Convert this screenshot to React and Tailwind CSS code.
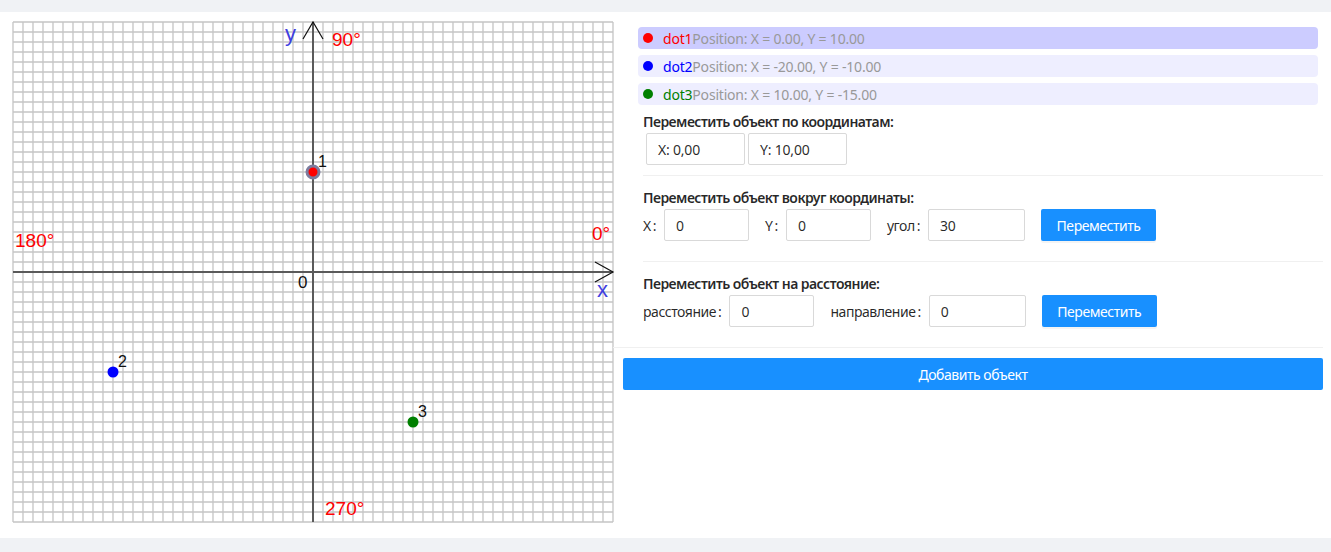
import React from "react";

const dots = [
  { name: "dot1", color: "#ff0000", x: 0, y: 10, sel: true, label: "1", pos: "X = 0.00, Y = 10.00" },
  { name: "dot2", color: "#0000ff", x: -20, y: -10, label: "2", pos: "X = -20.00, Y = -10.00" },
  { name: "dot3", color: "#008000", x: 10, y: -15, label: "3", pos: "X = 10.00, Y = -15.00" },
];

function Plane() {
  const v = [];
  for (let i = 0; i <= 60; i++) v.push(i * 10);
  const h = [];
  for (let i = 0; i <= 50; i++) h.push(i * 10);
  const font = "'Liberation Sans', Arial, sans-serif";
  return (
    <svg width="600" height="500" className="shrink-0 overflow-visible block">
      {v.map((x) => (
        <line key={"v" + x} x1={x} y1={0} x2={x} y2={500} stroke="#c4c4c4" strokeWidth="1.3" />
      ))}
      {h.map((y) => (
        <line key={"h" + y} x1={0} y1={y} x2={600} y2={y} stroke="#c4c4c4" strokeWidth="1.3" />
      ))}
      <line x1="300" y1="0" x2="300" y2="500" stroke="#5a5a5a" strokeWidth="2" />
      <line x1="0" y1="250" x2="600" y2="250" stroke="#5a5a5a" strokeWidth="2" />
      <polyline points="290,17 300,0 310,17" fill="none" stroke="#111" strokeWidth="1.2" />
      <polyline points="582,240 600,250 582,260" fill="none" stroke="#111" strokeWidth="1.2" />
      <text x="272" y="19" fontSize="22" fill="#3f3fe0" fontFamily={font}>y</text>
      <text x="584" y="275" fontSize="22" fill="#3f3fe0" fontFamily={font}>x</text>
      <g fontFamily={font} fontSize="19" fill="#ff0000">
        <text x="319" y="24">90°</text>
        <text x="2" y="225">180°</text>
        <text x="579" y="218">0°</text>
        <text x="312" y="493">270°</text>
      </g>
      <text x="285" y="266" fontSize="17" fill="#111" fontFamily={font}>0</text>
      {dots.map((d) => {
        const cx = 300 + d.x * 10;
        const cy = 250 - d.y * 10;
        return (
          <g key={d.name}>
            {d.sel ? (
              <circle cx={cx} cy={cy} r="6" fill={d.color} stroke="#7c7c9e" strokeWidth="3" />
            ) : (
              <circle cx={cx} cy={cy} r="5.5" fill={d.color} />
            )}
            <text x={cx + 5} y={cy - 5} fontSize="16" fill="#111" fontFamily={font}>
              {d.label}
            </text>
          </g>
        );
      })}
    </svg>
  );
}

function Label({ children }) {
  return (
    <span className="flex items-center text-[14px] tracking-[-0.45px] text-[rgba(0,0,0,0.85)] whitespace-nowrap">
      {children}
      <span className="ml-[2px] mr-[8px]">:</span>
    </span>
  );
}

function Input({ value, w }) {
  return (
    <div
      className={`h-[32px] border border-[#d9d9d9] rounded-[2px] bg-white flex items-center px-[11px] text-[14px] tracking-[-0.2px] text-[rgba(0,0,0,0.85)] ${w}`}
    >
      {value}
    </div>
  );
}

function Btn({ children }) {
  return (
    <div className="h-[32px] w-[115px] bg-[#1890ff] rounded-[2px] text-white text-[14px] tracking-[-0.45px] flex items-center justify-center shadow-[0_2px_0_rgba(0,0,0,0.045)]">
      {children}
    </div>
  );
}

function Title({ children }) {
  return (
    <div className="h-[22px] leading-[22px] text-[14px] font-semibold tracking-[-0.55px] text-[rgba(0,0,0,0.85)]">
      {children}
    </div>
  );
}

export default function App() {
  return (
    <div
      className="min-h-screen bg-[#f0f2f5] pt-[12px]"
      style={{ fontFamily: "'Noto Sans', 'Open Sans', sans-serif" }}
    >
      <div className="bg-white flex pl-[13px] pr-[8px] pt-[10px] pb-[16px]">
        <Plane />
        <div className="ml-[10px] w-[700px] flex flex-col">
          <div className="pt-[5px] pl-[15px] pr-[5px] flex flex-col gap-[6px]">
            {dots.map((d) => (
              <div
                key={d.name}
                className={`h-[22px] rounded-[4px] flex items-center pl-[5px] text-[14px] tracking-[-0.2px] ${
                  d.sel ? "bg-[#ccccff]" : "bg-[#eeeeff]"
                }`}
              >
                <span className="w-[10px] h-[10px] rounded-full mr-[10px]" style={{ background: d.color }} />
                <span style={{ color: d.color }}>{d.name}</span>
                <span className="text-[#999999]">Position: {d.pos}</span>
              </div>
            ))}
          </div>

          <div className="pl-[20px] mt-[6px]">
            <Title>Переместить объект по координатам:</Title>
            <div className="flex gap-[3px] ml-[3px]">
              <Input value="X: 0,00" w="w-[99px]" />
              <Input value="Y: 10,00" w="w-[99px]" />
            </div>
            <div className="mt-[10px] h-px bg-[#f0f0f0]" />
          </div>

          <div className="pl-[20px] mt-[11px]">
            <Title>Переместить объект вокруг координаты:</Title>
            <div className="flex items-center">
              <Label>X</Label>
              <Input value="0" w="w-[85px]" />
              <div className="w-[16px]" />
              <Label>Y</Label>
              <Input value="0" w="w-[85px]" />
              <div className="w-[16px]" />
              <Label>угол</Label>
              <Input value="30" w="w-[97px]" />
              <div className="w-[16px]" />
              <Btn>Переместить</Btn>
            </div>
            <div className="mt-[20px] h-px bg-[#f0f0f0]" />
          </div>

          <div className="pl-[20px] mt-[11px]">
            <Title>Переместить объект на расстояние:</Title>
            <div className="flex items-center">
              <Label>расстояние</Label>
              <Input value="0" w="w-[85px]" />
              <div className="w-[16px]" />
              <Label>направление</Label>
              <Input value="0" w="w-[97px]" />
              <div className="w-[16px]" />
              <Btn>Переместить</Btn>
            </div>
          </div>
          <div className="mt-[20px] -ml-[10px] h-px bg-[#f0f0f0]" />
          <div className="mt-[10px] h-[32px] bg-[#1890ff] rounded-[2px] text-white text-[14px] tracking-[-0.45px] flex items-center justify-center">
            Добавить объект
          </div>
        </div>
      </div>
    </div>
  );
}
